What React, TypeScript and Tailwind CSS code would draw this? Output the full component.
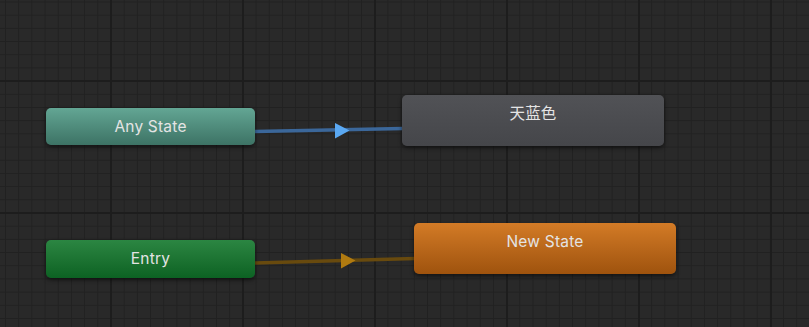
import * as React from "react";

const font = "font-['Inter','Noto_Sans_CJK_SC',sans-serif]";

type NodeProps = {
  label: string;
  className: string;
};

function StateNode({ label, className }: NodeProps) {
  return (
    <div
      className={`absolute rounded-[5px] shadow-[0_2px_4px_rgba(0,0,0,0.55)] ${className}`}
    >
      <div className="flex h-[37px] items-center justify-center">
        <span className={`${font} text-[15.5px] leading-none tracking-[0.2px] text-[#e4e4e4]`}>
          {label}
        </span>
      </div>
    </div>
  );
}

export default function App() {
  return (
    <div
      className="relative h-[327px] w-[809px] overflow-hidden bg-[#292929] bg-[image:linear-gradient(to_right,#1d1d1d_2px,transparent_2px),linear-gradient(to_bottom,#1d1d1d_2px,transparent_2px),linear-gradient(to_right,#212121_1px,transparent_1px),linear-gradient(to_bottom,#212121_1px,transparent_1px)] bg-size-[132px_132px,132px_132px,13.2px_13.2px,13.2px_13.2px] bg-position-[110px_0,0_80px,5px_0,0_1.5px]"
    >
      {/* transitions */}
      <svg className="absolute inset-0" width="809" height="327">
        <line x1="255" y1="131.5" x2="403" y2="128.5" stroke="#3b679a" strokeWidth="3.5" />
        <polygon points="335,123 335,138.5 349.5,130.5" fill="#5aa8f2" />
        <line x1="255" y1="263" x2="415" y2="258.5" stroke="#684a0e" strokeWidth="3.5" />
        <polygon points="341,253 341,268.5 355.5,260.5" fill="#b07a10" />
      </svg>

      <StateNode
        label="Any State"
        className="left-[46px] top-[108px] h-[37px] w-[209px] bg-linear-to-b from-[#63a694] to-[#3d7365]"
      />
      <StateNode
        label="Entry"
        className="left-[46px] top-[240px] h-[38px] w-[209px] bg-linear-to-b from-[#2b8642] to-[#0c6223]"
      />
      <StateNode
        label="天蓝色"
        className="left-[402px] top-[95px] h-[51px] w-[262px] bg-linear-to-b from-[#515256] to-[#45464a]"
      />
      <StateNode
        label="New State"
        className="left-[414px] top-[223px] h-[51px] w-[262px] bg-linear-to-b from-[#d37b26] to-[#9f530e]"
      />
    </div>
  );
}
